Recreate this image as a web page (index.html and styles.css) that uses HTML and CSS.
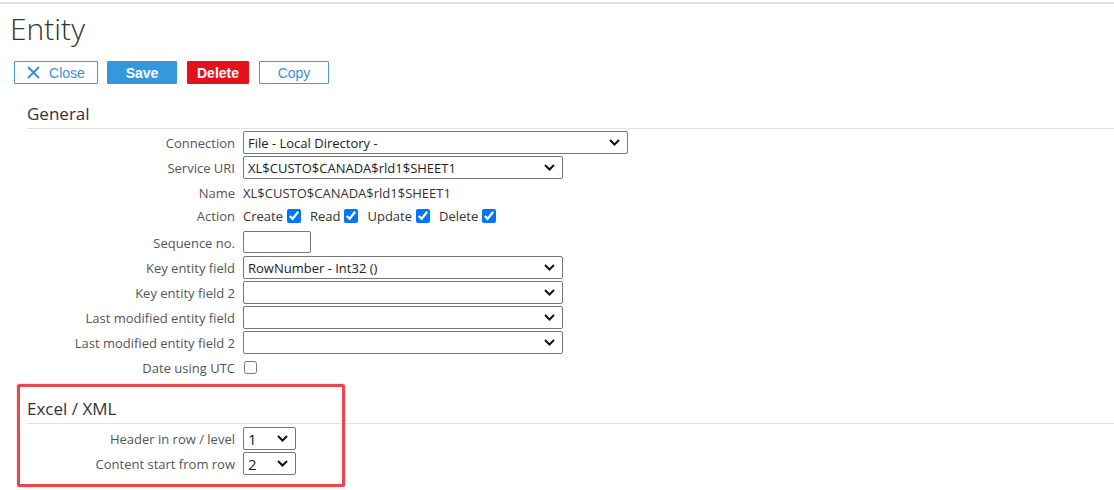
FILE: index.html
```html
<!DOCTYPE html>
<html lang="en">
<head>
    <meta charset="UTF-8">
    <title>Entity</title>
    <link rel="stylesheet" href="styles.css">
</head>
<body>
    <div class="topLine"></div>
    <h1 class="pageTitle">Entity</h1>

    <div class="toolbar">
        <button class="btn btnOutline btnClose">
            <svg width="13" height="13" viewBox="0 0 13 13"><path d="M1 1L12 12M12 1L1 12" stroke="#3b8fd4" stroke-width="2" fill="none"/></svg>
            Close
        </button>
        <button class="btn btnSave">Save</button>
        <button class="btn btnDelete">Delete</button>
        <button class="btn btnOutline btnCopy">Copy</button>
    </div>

    <section class="group">
        <h2 class="groupTitle">General</h2>
        <div class="formGrid">
            <label>Connection</label>
            <div class="selectWrap wide">
                <select><option>File - Local Directory -</option></select>
                <svg class="chev" width="11" height="7" viewBox="0 0 11 7"><path d="M1 1L5.5 5.5L10 1" stroke="#111" stroke-width="2" fill="none"/></svg>
            </div>

            <label>Service URI</label>
            <div class="selectWrap medium">
                <select><option>XL$CUSTO$CANADA$rld1$SHEET1</option></select>
                <svg class="chev" width="11" height="7" viewBox="0 0 11 7"><path d="M1 1L5.5 5.5L10 1" stroke="#111" stroke-width="2" fill="none"/></svg>
            </div>

            <label>Name</label>
            <div class="value">XL$CUSTO$CANADA$rld1$SHEET1</div>

            <label class="up">Action</label>
            <div class="value checks up">
                Create <input type="checkbox" checked>
                Read <input type="checkbox" checked>
                Update <input type="checkbox" checked>
                Delete <input type="checkbox" checked>
            </div>

            <label>Sequence no.</label>
            <div><input type="text" class="textInput"></div>

            <label>Key entity field</label>
            <div class="selectWrap medium">
                <select><option>RowNumber - Int32 ()</option></select>
                <svg class="chev" width="11" height="7" viewBox="0 0 11 7"><path d="M1 1L5.5 5.5L10 1" stroke="#111" stroke-width="2" fill="none"/></svg>
            </div>

            <label>Key entity field 2</label>
            <div class="selectWrap medium">
                <select><option></option></select>
                <svg class="chev" width="11" height="7" viewBox="0 0 11 7"><path d="M1 1L5.5 5.5L10 1" stroke="#111" stroke-width="2" fill="none"/></svg>
            </div>

            <label>Last modified entity field</label>
            <div class="selectWrap medium">
                <select><option></option></select>
                <svg class="chev" width="11" height="7" viewBox="0 0 11 7"><path d="M1 1L5.5 5.5L10 1" stroke="#111" stroke-width="2" fill="none"/></svg>
            </div>

            <label>Last modified entity field 2</label>
            <div class="selectWrap medium">
                <select><option></option></select>
                <svg class="chev" width="11" height="7" viewBox="0 0 11 7"><path d="M1 1L5.5 5.5L10 1" stroke="#111" stroke-width="2" fill="none"/></svg>
            </div>

            <label>Date using UTC</label>
            <div class="value"><input type="checkbox" class="solo"></div>
        </div>
    </section>

    <section class="group excel">
        <h2 class="groupTitle">Excel / XML</h2>
        <div class="formGrid">
            <label>Header in row / level</label>
            <div class="selectWrap small">
                <select><option>1</option></select>
                <svg class="chev" width="11" height="7" viewBox="0 0 11 7"><path d="M1 1L5.5 5.5L10 1" stroke="#111" stroke-width="2" fill="none"/></svg>
            </div>

            <label>Content start from row</label>
            <div class="selectWrap small">
                <select><option>2</option></select>
                <svg class="chev" width="11" height="7" viewBox="0 0 11 7"><path d="M1 1L5.5 5.5L10 1" stroke="#111" stroke-width="2" fill="none"/></svg>
            </div>
        </div>
    </section>

    <div class="highlight"></div>
</body>
</html>
```

FILE: styles.css
```css
body {
    margin: 0;
    background: #fff;
    font-family: "Open Sans", "Liberation Sans", sans-serif;
    color: #333;
    position: relative;
    height: 490px;
    overflow: hidden;
}

.topLine {
    margin-top: 2px;
    height: 2px;
    background: #e2e2e2;
}

.pageTitle {
    margin: 7px 0 0 10px;
    font-size: 30px;
    font-weight: 300;
    line-height: 36px;
    color: #333;
}

.toolbar {
    display: flex;
    gap: 9px;
    margin: 14px 0 0 14px;
}

.btn {
    height: 23px;
    padding: 0;
    border: 1px solid transparent;
    border-radius: 1px;
    font-family: "Liberation Sans", Arial, sans-serif;
    font-size: 14px;
    display: flex;
    align-items: center;
    justify-content: center;
}

.btnOutline {
    background: #fff;
    border-color: #4a98d8;
    color: #3b8fd4;
}

.btnClose {
    width: 84px;
    gap: 9px;
}

.btnCopy {
    width: 70px;
    margin-left: 1px;
}

.btnSave {
    width: 70px;
    background: #3598dc;
    border-color: #3598dc;
    color: #fff;
    font-weight: bold;
}

.btnDelete {
    width: 62px;
    background: #e3111c;
    border-color: #e3111c;
    color: #fff;
    font-weight: bold;
    margin-left: 1px;
}

.group {
    margin-left: 27px;
}

.groupTitle {
    margin: 19px 0 0;
    padding-bottom: 3px;
    font-size: 17px;
    font-weight: normal;
    line-height: 22px;
    color: #333;
    border-bottom: 1px solid #e3e3e3;
}

.formGrid {
    display: grid;
    grid-template-columns: 208px auto;
    column-gap: 8px;
    row-gap: 2px;
    margin-top: 2px;
    grid-auto-rows: 23px;
    font-size: 13px;
}

.excel .formGrid {
    margin-top: 3px;
}

.formGrid label {
    text-align: right;
    color: #555;
    align-self: center;
}

.formGrid .up {
    position: relative;
    top: -2px;
}

.value {
    display: flex;
    align-items: center;
    color: #333;
}

.checks input {
    width: 14px;
    height: 14px;
    margin: 0 9px 0 4px;
    accent-color: #0075ff;
}

.value .solo {
    width: 13px;
    height: 13px;
    margin: 0 0 0 1px;
}

.selectWrap {
    position: relative;
    height: 23px;
}

.selectWrap select {
    appearance: none;
    width: 100%;
    height: 23px;
    margin: 0;
    padding: 0 0 0 4px;
    border: 1px solid #767676;
    border-radius: 2px;
    background: #fff;
    font-family: "Open Sans", sans-serif;
    font-size: 13px;
    color: #222;
}

.chev {
    position: absolute;
    right: 8px;
    top: 8px;
    pointer-events: none;
}

.wide {
    width: 385px;
}

.medium {
    width: 320px;
}

.small {
    width: 53px;
}

.small select {
    font-size: 15px;
}

.textInput {
    width: 68px;
    height: 22px;
    box-sizing: border-box;
    border: 1px solid #767676;
    border-radius: 2px;
    margin: 0;
}

.highlight {
    position: absolute;
    left: 17px;
    top: 384px;
    width: 322px;
    height: 97px;
    border: 3px solid #e5484d;
    border-radius: 2px;
    box-shadow: 0 0 2px rgba(229, 72, 77, 0.5);
}
```
